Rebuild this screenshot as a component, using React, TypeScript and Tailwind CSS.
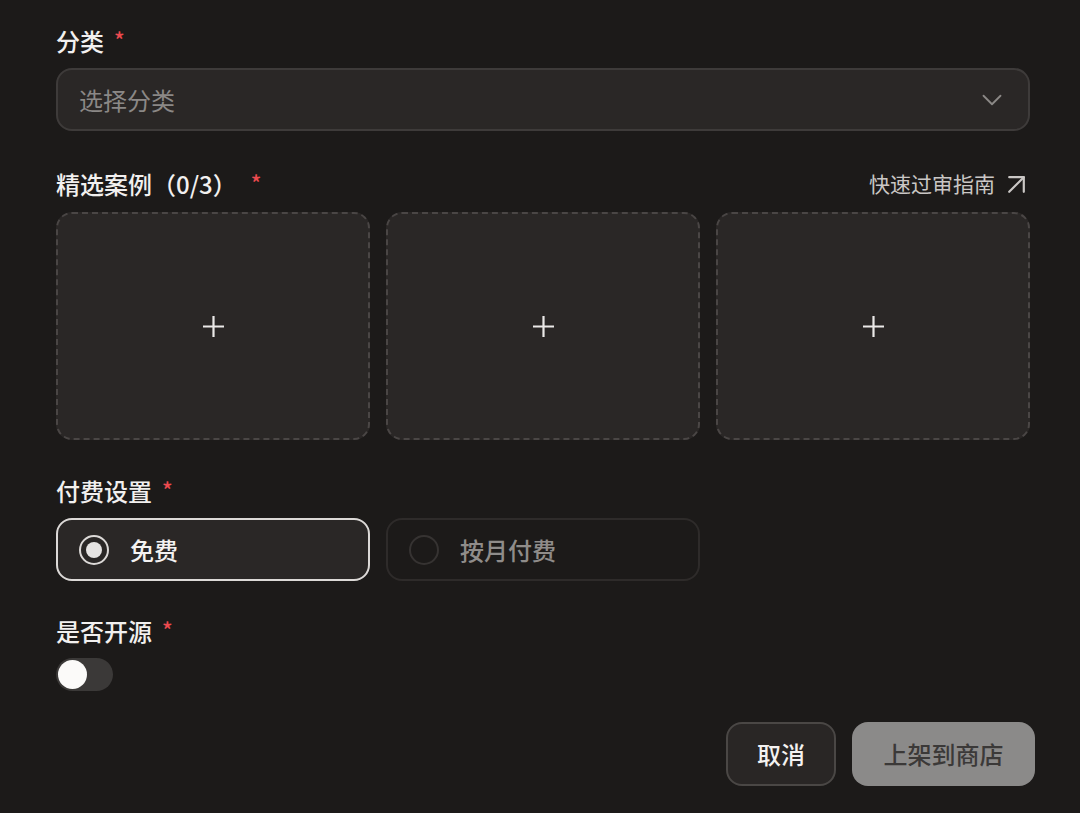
import { ArrowUpRight, ChevronDown } from "lucide-react";

const font = { fontFamily: '"Noto Sans CJK SC", "Noto Sans", sans-serif' };

function Asterisk({ gap }: { gap: string }) {
  return <span className={`${gap} -mt-[4px] text-[22px] leading-none text-[#ec4a4f]`}>*</span>;
}

function Label({ text }: { text: string }) {
  return (
    <div className="flex h-[30px] items-center text-[24px] font-medium leading-[30px] text-[#f2f0ef]">
      <span>{text}</span>
      <Asterisk gap="ml-[10px]" />
    </div>
  );
}

function PlusIcon() {
  return (
    <svg width="21" height="21" viewBox="0 0 21 21" fill="none">
      <path d="M10.5 0v21M0 10.5h21" stroke="#ebe9e8" strokeWidth="2.2" />
    </svg>
  );
}

function UploadTile() {
  return (
    <div className="flex h-[228px] items-center justify-center rounded-[16px] border-2 border-dashed border-[#4a4645] bg-[#2a2726]">
      <PlusIcon />
    </div>
  );
}

export default function App() {
  return (
    <div className="min-h-[813px] w-full bg-[#1c1a19] pl-[56px] pr-[50px] pt-[26px]" style={font}>
      {/* 分类 */}
      <Label text="分类" />
      <div className="mt-[12px] flex h-[63px] items-center justify-between rounded-[16px] border-2 border-[#3e3b3a] bg-[#2a2726] pl-[21px] pr-[19px]">
        <span className="text-[24px] text-[#8b8886]">选择分类</span>
        <ChevronDown size={34} strokeWidth={1.3} className="text-[#8b8886]" />
      </div>

      {/* 精选案例 */}
      <div className="mt-[38px] flex h-[30px] items-center justify-between">
        <div className="flex h-[30px] items-center text-[24px] font-medium leading-[30px] text-[#f2f0ef]">
          <span>精选案例（0/3）</span>
          <Asterisk gap="ml-[14px]" />
        </div>
        <a className="-mr-[4px] flex items-center gap-[4px] text-[21px] text-[#cac7c5]">
          <span>快速过审指南</span>
          <ArrowUpRight size={35} strokeWidth={1.5} className="-my-[3px]" />
        </a>
      </div>
      <div className="mt-[13px] grid grid-cols-3 gap-[16px]">
        <UploadTile />
        <UploadTile />
        <UploadTile />
      </div>

      {/* 付费设置 */}
      <div className="mt-[36px]">
        <Label text="付费设置" />
      </div>
      <div className="mt-[12px] grid grid-cols-3 gap-[16px]">
        <button className="flex h-[63px] items-center gap-[21px] rounded-[16px] border-2 border-[#dcd9d7] bg-[#2a2726] pl-[21px] text-left">
          <span className="flex h-[30px] w-[30px] items-center justify-center rounded-full border-2 border-[#dcd9d7]">
            <span className="h-[16px] w-[16px] rounded-full bg-[#e6e4e3]" />
          </span>
          <span className="text-[24px] font-medium text-[#f4f2f1]">免费</span>
        </button>
        <button className="flex h-[63px] items-center gap-[21px] rounded-[16px] border-2 border-[#2e2b2a] pl-[21px] text-left">
          <span className="h-[30px] w-[30px] rounded-full border-2 border-[#363332]" />
          <span className="text-[24px] font-medium text-[#8f8c8a]">按月付费</span>
        </button>
      </div>

      {/* 是否开源 */}
      <div className="mt-[35px]">
        <Label text="是否开源" />
      </div>
      <div className="mt-[12px] flex h-[33px] w-[57px] items-center rounded-full bg-[#3b3938] p-[2px]">
        <span className="h-[29px] w-[29px] rounded-full bg-[#fbfaf9]" />
      </div>

      {/* footer */}
      <div className="-mr-[5px] mt-[31px] flex justify-end gap-[16px]">
        <button className="h-[64px] w-[110px] rounded-[16px] border-2 border-[#4a4745] bg-[#292625] text-[24px] font-medium text-[#f4f2f1]">
          取消
        </button>
        <button className="h-[64px] w-[183px] rounded-[16px] bg-[#8b8a89] text-[24px] font-medium text-[#3b3938]">
          上架到商店
        </button>
      </div>
    </div>
  );
}
